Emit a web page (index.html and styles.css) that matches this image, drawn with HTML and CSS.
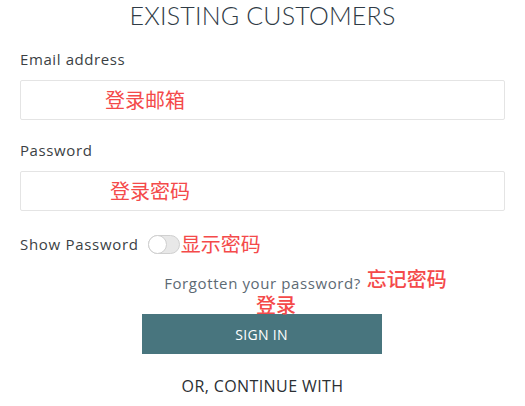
FILE: index.html
```html
<!DOCTYPE html>
<html lang="en">
<head>
<meta charset="utf-8">
<title>Existing customers</title>
<link rel="stylesheet" href="styles.css">
</head>
<body>
<main class="login">
  <h1 class="title">EXISTING CUSTOMERS</h1>
  <form class="form">
    <label class="label">Email address</label>
    <div class="field"><span class="note note-email">登录邮箱</span></div>
    <label class="label label-pass">Password</label>
    <div class="field"><span class="note note-pass">登录密码</span></div>
    <div class="show-row">
      <span class="show-text">Show Password</span>
      <span class="toggle"><span class="knob"></span></span>
      <span class="note">显示密码</span>
    </div>
    <div class="forgot-row">
      <span class="forgot">Forgotten your password?<span class="note note-forgot">忘记密码</span></span>
    </div>
    <div class="btn-wrap">
      <span class="note note-login">登录</span>
      <button type="button" class="btn">SIGN IN</button>
    </div>
    <p class="continue">OR, CONTINUE WITH</p>
  </form>
</main>
</body>
</html>
```

FILE: styles.css
```css
html, body {
  margin: 0;
  padding: 0;
  background: #ffffff;
}
body {
  font-family: "Open Sans", Lato, "Liberation Sans", sans-serif;
  color: #3b3f44;
}
.login {
  padding: 0 20px;
}
.title {
  margin: 0;
  font-family: Lato, "Open Sans", sans-serif;
  font-size: 25px;
  font-weight: 300;
  line-height: 30px;
  text-align: center;
  color: #2f3b46;
  letter-spacing: 0.2px;
}
.form {
  display: flex;
  flex-direction: column;
  margin-top: 19px;
}
.label {
  font-size: 15px;
  line-height: 20px;
  letter-spacing: 0.6px;
  color: #3b3f44;
}
.label-pass {
  margin-top: 20px;
}
.field {
  margin-top: 11px;
  height: 38px;
  border: 1px solid #e4e4e4;
  border-radius: 2px;
  display: flex;
  align-items: center;
}
.note {
  font-family: "Noto Sans CJK SC", sans-serif;
  font-size: 20px;
  line-height: 22px;
  letter-spacing: 0;
  color: #f44a4a;
}
.note-email {
  margin-left: 84px;
}
.note-pass {
  margin-left: 89px;
}
.show-row {
  margin-top: 22px;
  display: flex;
  align-items: center;
  height: 22px;
}
.show-text {
  font-size: 15px;
  letter-spacing: 0.7px;
  color: #3b3f44;
}
.toggle {
  margin-left: 9px;
  margin-right: 1px;
  width: 30px;
  height: 17px;
  border: 1px solid #d0d0d0;
  border-radius: 10px;
  background: #e8e8e8;
  position: relative;
  display: inline-block;
}
.knob {
  position: absolute;
  left: -1px;
  top: -1px;
  width: 17px;
  height: 17px;
  border-radius: 50%;
  background: #ffffff;
  border: 1px solid #cfcfcf;
}
.forgot-row {
  margin-top: 17px;
  text-align: center;
  line-height: 22px;
}
.forgot {
  position: relative;
  font-size: 15px;
  letter-spacing: 0.6px;
  color: #5d6a74;
}
.note-forgot {
  position: absolute;
  left: 100%;
  top: -5px;
  margin-left: 6px;
  white-space: nowrap;
  font-weight: 500;
}
.btn-wrap {
  position: relative;
  margin-top: 20px;
  display: flex;
  justify-content: center;
  padding-right: 2px;
}
.note-login {
  position: absolute;
  left: 236px;
  top: -20px;
  font-weight: 500;
}
.btn {
  width: 240px;
  height: 40px;
  border: 0;
  border-radius: 0;
  background: #48757e;
  color: #ffffff;
  font-family: "Open Sans", Lato, sans-serif;
  font-size: 14px;
  letter-spacing: 0.3px;
}
.continue {
  margin: 21px 0 0;
  text-align: center;
  font-size: 16px;
  line-height: 22px;
  letter-spacing: 0.4px;
  color: #2b2f33;
}
```
